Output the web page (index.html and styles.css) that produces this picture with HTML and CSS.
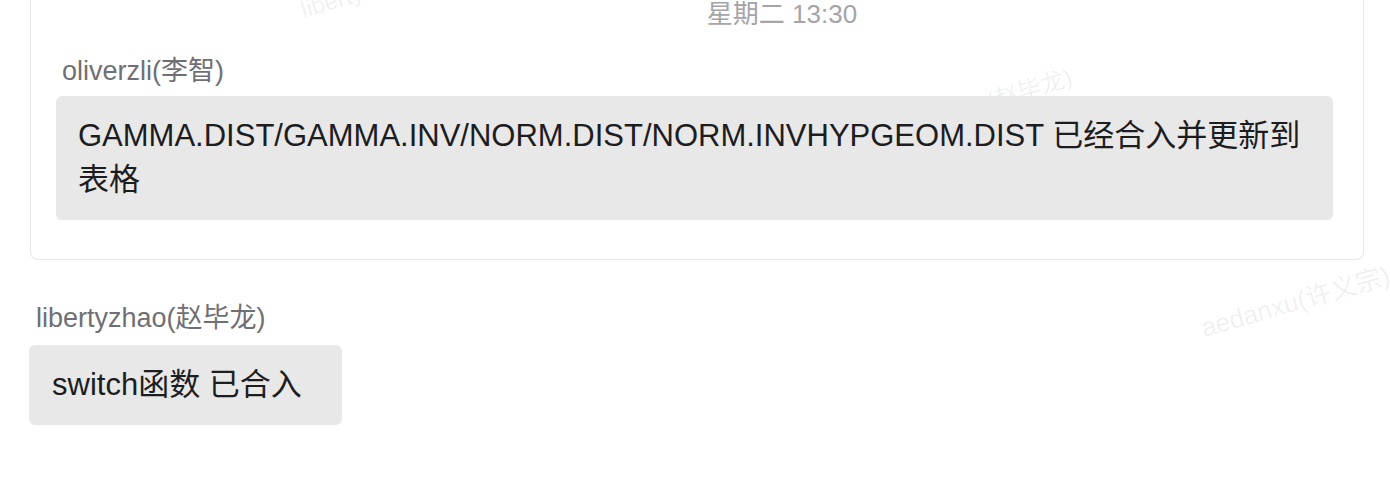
FILE: index.html
```html
<!DOCTYPE html>
<html lang="zh-CN">
<head>
<meta charset="utf-8">
<title>Chat</title>
<link rel="stylesheet" href="styles.css">
</head>
<body>
<div class="watermarks" aria-hidden="true">
  <span class="wm wm-1">libertyzhao(赵毕龙)</span>
  <span class="wm wm-2">libertyzhao(赵毕龙)</span>
  <span class="wm wm-3">aedanxu(许义宗)</span>
</div>
<main class="page">
  <section class="card">
    <div class="time">星期二 13:30</div>
    <div class="msg">
      <div class="name">oliverzli(李智)</div>
      <div class="bubble">GAMMA.DIST/GAMMA.INV/NORM.DIST/NORM.INVHYPGEOM.DIST 已经合入并更新到表格</div>
    </div>
  </section>
  <div class="msg msg-loose">
    <div class="name">libertyzhao(赵毕龙)</div>
    <div class="bubble bubble-inline">switch函数 已合入</div>
  </div>
</main>
</body>
</html>
```

FILE: styles.css
```css
html, body {
  margin: 0;
  padding: 0;
  background: #ffffff;
}

body {
  font-family: "Liberation Sans", "Noto Sans CJK SC", sans-serif;
  color: #1f1f21;
  width: 1390px;
  height: 502px;
  overflow: hidden;
  position: relative;
}

.watermarks {
  position: absolute;
  inset: 0;
  pointer-events: none;
  z-index: 0;
}

.wm {
  position: absolute;
  font-size: 24px;
  line-height: 24px;
  color: rgba(0, 0, 0, 0.07);
  white-space: nowrap;
  transform-origin: 0 100%;
  transform: rotate(-17deg);
}

.wm-1 { left: 305px; top: -2px; }
.wm-2 { left: 880px; top: 124px; }
.wm-3 {
  left: 1205px;
  top: 316px;
  font-size: 26px;
  transform: rotate(-16deg);
}

.page {
  position: relative;
  z-index: 1;
  padding: 0 26px 0 29px;
}

.card {
  margin-left: 1px;
  border: 1px solid #e6e6e6;
  border-top: none;
  border-radius: 0 0 8px 8px;
  padding: 0 30px 39px 25px;
}

.time {
  font-size: 26px;
  line-height: 28px;
  color: #a4a4a9;
  text-align: center;
  padding-left: 175px;
}

.card .msg {
  margin-top: 26px;
}

.card .name {
  margin-bottom: 7px;
}

.name {
  font-size: 27px;
  line-height: 35px;
  color: #6f6f74;
  padding-left: 6px;
  margin-bottom: 9px;
}

.msg-loose {
  margin-top: 41px;
}

.msg-loose .name {
  padding-left: 7px;
}

.bubble {
  background: #e8e8e8;
  border-radius: 6px;
  font-size: 31px;
  line-height: 44px;
  padding: 18px 22px 18px 22px;
  color: #1d1d1f;
}

.bubble-inline {
  display: inline-block;
  padding-left: 23px;
  padding-right: 40px;
}
```
